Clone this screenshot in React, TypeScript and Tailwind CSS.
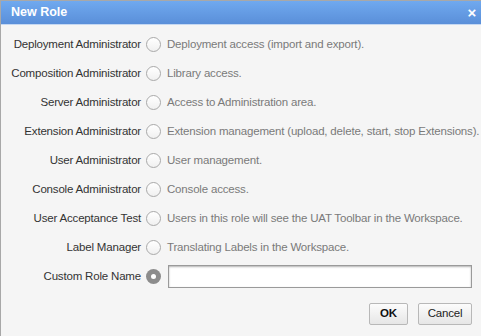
import React from 'react';

const roles = [
  { name: 'Deployment Administrator', desc: 'Deployment access (import and export).' },
  { name: 'Composition Administrator', desc: 'Library access.' },
  { name: 'Server Administrator', desc: 'Access to Administration area.' },
  { name: 'Extension Administrator', desc: 'Extension management (upload, delete, start, stop Extensions).' },
  { name: 'User Administrator', desc: 'User management.' },
  { name: 'Console Administrator', desc: 'Console access.' },
  { name: 'User Acceptance Test', desc: 'Users in this role will see the UAT Toolbar in the Workspace.' },
  { name: 'Label Manager', desc: 'Translating Labels in the Workspace.' },
];

function Radio({ checked }: { checked?: boolean }) {
  if (checked) {
    return (
      <span className="flex h-[15px] w-[15px] items-center justify-center rounded-full bg-[#8c8c8c]">
        <span className="h-[5px] w-[5px] rounded-full bg-white" />
      </span>
    );
  }
  return (
    <span className="block h-[15px] w-[15px] rounded-full border border-[#a9a9a9] bg-gradient-to-b from-white to-[#f0f0f0]" />
  );
}

export default function App() {
  return (
    <div
      className="flex h-[336px] w-[481px] flex-col overflow-hidden border-t border-l border-[#a8a8a8] bg-[#f5f5f5] text-[11.5px] tracking-[-0.18px]"
      style={{ fontFamily: '"Liberation Sans", Arial, sans-serif' }}
    >
      {/* Title bar */}
      <div className="flex h-[24px] items-center justify-between border-b border-[#c5d8f2] bg-gradient-to-b from-[#70a9ef] to-[#5a8fd9] pl-[10px] pr-[5px]">
        <span className="text-[12.5px] font-bold tracking-normal text-white">New Role</span>
        <span className="text-[15px] font-bold leading-none text-white">×</span>
      </div>

      {/* Rows */}
      <div className="flex flex-col pt-[5px]">
        {roles.map((r) => (
          <div key={r.name} className="flex h-[29px] items-center">
            <span className="w-[140px] shrink-0 whitespace-nowrap text-right text-[#333]">{r.name}</span>
            <span className="ml-[5px] shrink-0">
              <Radio />
            </span>
            <span className="ml-[6px] whitespace-nowrap text-[#7a7a7a]">{r.desc}</span>
          </div>
        ))}
        <div className="flex h-[29px] items-center">
          <span className="w-[140px] shrink-0 text-right text-[#333]">Custom Role Name</span>
          <span className="ml-[5px] shrink-0">
            <Radio checked />
          </span>
          <input
            className="ml-[7px] h-[23px] w-[304px] border border-[#9a9a9a] bg-white shadow-[inset_0_1px_2px_rgba(0,0,0,0.3)] outline-none"
            defaultValue=""
          />
        </div>
      </div>

      {/* Buttons */}
      <div className="mt-[12px] flex justify-end gap-[10px] pr-[9px]">
        <button className="h-[22px] w-[39px] rounded-[2px] border border-[#b8b8b8] bg-gradient-to-b from-[#fcfcfc] to-[#e6e6e6] font-bold text-[#111]">
          OK
        </button>
        <button className="h-[22px] w-[54px] rounded-[2px] border border-[#b8b8b8] bg-gradient-to-b from-[#fcfcfc] to-[#e6e6e6] text-[#222]">
          Cancel
        </button>
      </div>
    </div>
  );
}
